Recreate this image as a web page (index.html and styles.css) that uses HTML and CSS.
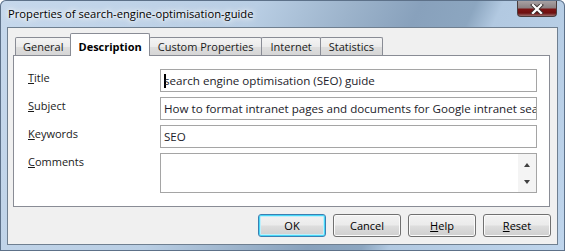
FILE: index.html
```html
<!DOCTYPE html>
<html lang="en">
<head>
    <meta charset="UTF-8">
    <title>Properties of search-engine-optimisation-guide</title>
    <link rel="stylesheet" href="styles.css">
</head>
<body>

    <div class="window">
        <div class="titlebar">
            <span class="caption">Properties of search-engine-optimisation-guide</span>
            <span class="close">
                <svg width="16" height="10" viewBox="0 0 16 10">
                    <path d="M4 1 L12 9 M12 1 L4 9" stroke="#3a3030" stroke-width="4" stroke-linecap="square"/>
                    <path d="M4 1 L12 9 M12 1 L4 9" stroke="#fff" stroke-width="2.2" stroke-linecap="square"/>
                </svg>
            </span>
        </div>

        <div class="client">
            <div class="tabs">
                <div class="tab">General</div>
                <div class="tab active">Description</div>
                <div class="tab">Custom Properties</div>
                <div class="tab">Internet</div>
                <div class="tab">Statistics</div>
            </div>

            <div class="panel">
                <div class="row">
                    <label><u>T</u>itle</label>
                    <div class="field"><span class="caret"></span>search engine optimisation (SEO) guide</div>
                </div>
                <div class="row">
                    <label><u>S</u>ubject</label>
                    <div class="field">How to format intranet pages and documents for Google intranet search</div>
                </div>
                <div class="row">
                    <label><u>K</u>eywords</label>
                    <div class="field">SEO</div>
                </div>
                <div class="row">
                    <label><u>C</u>omments</label>
                    <div class="field comments">
                        <div class="scroll">
                            <span class="arrow up"></span>
                            <span class="arrow down"></span>
                        </div>
                    </div>
                </div>
            </div>

            <div class="buttons">
                <button class="default">OK</button>
                <button>Cancel</button>
                <button><u>H</u>elp</button>
                <button><u>R</u>eset</button>
            </div>
        </div>
    </div>

</body>
</html>
```

FILE: styles.css
```css
body {
    margin: 0;
    padding: 0;
    background: #fff;
    font-family: 'Open Sans', 'Noto Sans', sans-serif;
    font-size: 11px;
    color: #000;
}

.window {
    width: 565px;
    height: 251px;
    box-sizing: border-box;
    display: flex;
    flex-direction: column;
    border-radius: 6px 6px 0 0;
    background: linear-gradient(115deg,
        #c6d8ec 0%,
        #b9cee4 38%,
        #9cb3cb 52%,
        #88a1bc 62%,
        #8ca6c0 70%,
        #b2c9e1 74%,
        #bfd5ec 100%);
    box-shadow: inset 0 0 0 1px #5d7189;
}

.titlebar {
    height: 27px;
    display: flex;
    align-items: flex-start;
    padding-left: 8px;
}

.caption {
    margin-top: 6px;
    line-height: 16px;
    font-size: 11.2px;
    text-shadow: 0 0 6px #fff, 0 0 10px #fff, 0 0 3px rgba(255, 255, 255, 0.9);
}

.close {
    margin-left: auto;
    margin-right: 8px;
    margin-top: 1px;
    width: 40px;
    height: 16px;
    box-sizing: border-box;
    border: 1px solid #4a3c3c;
    border-top: none;
    border-radius: 0 0 4px 4px;
    background: linear-gradient(#a8a0a2 0%, #8c8284 45%, #7c1414 55%, #6e1010 80%, #9a6c6c 100%);
    display: flex;
    align-items: center;
    justify-content: center;
}

.client {
    flex: 1;
    margin: 0 7px 6px 7px;
    border: 1px solid #6f7f90;
    background: #f0f0f0;
    display: flex;
    flex-direction: column;
}

.tabs {
    height: 27px;
    box-sizing: border-box;
    display: flex;
    align-items: flex-end;
    padding: 5px 0 0 7px;
}

.tab {
    height: 18px;
    box-sizing: border-box;
    padding: 1px 8px 0 8px;
    line-height: 16px;
    border: 1px solid #898c95;
    border-bottom: none;
    margin-left: -1px;
    border-radius: 2px 2px 0 0;
    background: linear-gradient(#f4f4f4 0%, #ebebeb 50%, #dedede 51%, #d6d6d6 100%);
    color: #1a1a1a;
}

.tab:first-child {
    margin-left: 0;
    padding: 1px 7px 0 7px;
}

.tab.active {
    height: 23px;
    margin-bottom: -1px;
    padding: 5px 7px 0 7px;
    background: #fff;
    font-weight: bold;
    color: #000;
    position: relative;
    z-index: 1;
}

.panel {
    height: 152px;
    box-sizing: border-box;
    margin: 0 7px 0 5px;
    border: 1px solid #898c95;
    background: #fff;
    padding: 13px 12px 0 14px;
    display: flex;
    flex-direction: column;
    gap: 5px;
}

.row {
    display: flex;
}

.row label {
    width: 132px;
    line-height: 16px;
    padding-top: 1px;
    color: #1a1a1a;
}

.field {
    flex: 1;
    height: 23px;
    box-sizing: border-box;
    border: 1px solid #a5a5a5;
    padding: 0 3px;
    font-size: 11.6px;
    line-height: 21px;
    white-space: nowrap;
    overflow: hidden;
    color: #1c1c2a;
}

.caret {
    display: inline-block;
    width: 2px;
    height: 14px;
    margin-right: -2px;
    vertical-align: -3px;
    background: #000;
}

.field.comments {
    height: 40px;
    padding: 0;
    display: flex;
    justify-content: flex-end;
}

.scroll {
    width: 18px;
    background: #f4f4f4;
    display: flex;
    flex-direction: column;
    align-items: center;
    justify-content: space-between;
    padding: 9px 0 8px 0;
    box-sizing: border-box;
}

.arrow {
    width: 0;
    height: 0;
    border-left: 3px solid transparent;
    border-right: 3px solid transparent;
}

.arrow.up {
    border-bottom: 4px solid #404040;
}

.arrow.down {
    border-top: 4px solid #404040;
}

.buttons {
    display: flex;
    justify-content: flex-end;
    gap: 7px;
    margin-top: 7px;
    padding-right: 6px;
}

button {
    width: 68px;
    height: 23px;
    font-family: inherit;
    font-size: 11px;
    color: #000;
    padding: 0;
    border: 1px solid #707070;
    border-radius: 3px;
    background: linear-gradient(#f2f2f2 0%, #ebebeb 48%, #dddddd 52%, #cfcfcf 100%);
    box-shadow: inset 0 0 0 1px #fbfbfb;
}

button.default {
    border-color: #3c7fb1;
    box-shadow: inset 0 0 0 1px #48d8f8, inset 0 0 0 2px #bfeffb;
}
```
